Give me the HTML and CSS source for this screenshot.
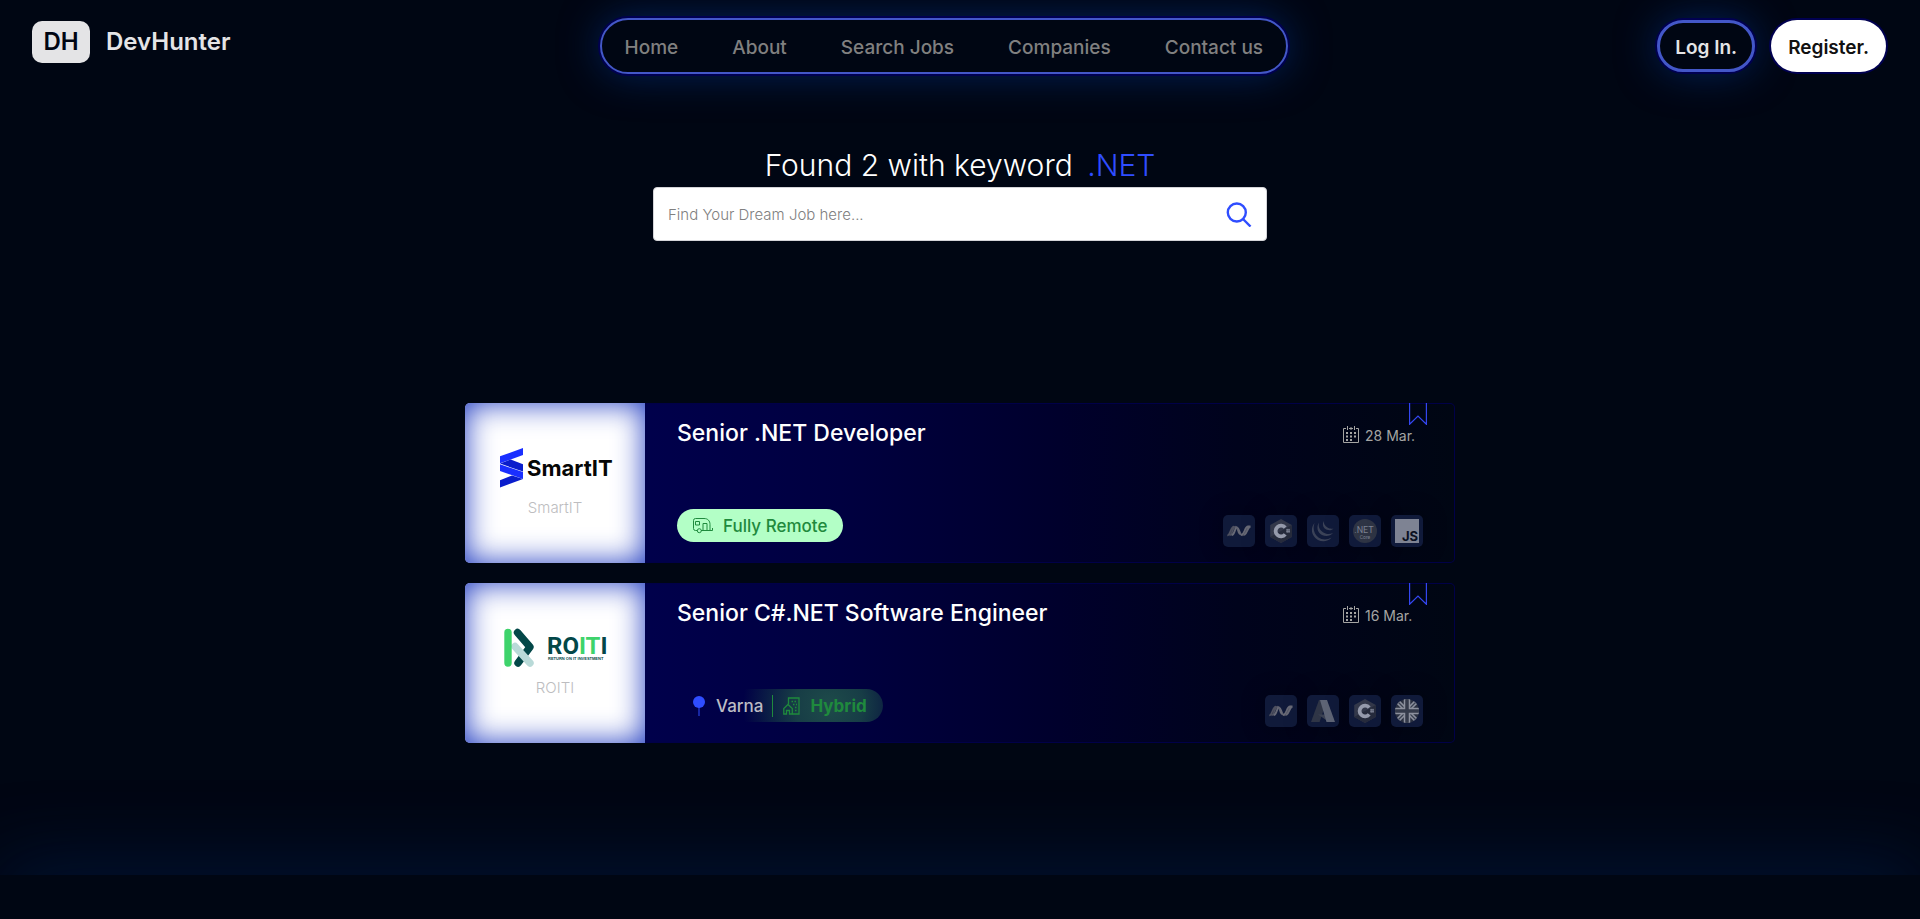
FILE: index.html
```html
<!DOCTYPE html>
<html lang="en">
<head>
<meta charset="utf-8">
<meta name="viewport" content="width=device-width, initial-scale=1">
<title>DevHunter</title>
<link rel="stylesheet" href="styles.css">
</head>
<body>
<svg class="sprite" aria-hidden="true">
  <defs>
    <linearGradient id="steel" x1="0" y1="0" x2="1" y2="0">
      <stop offset="0" stop-color="#45485a"/><stop offset=".5" stop-color="#6a6c78"/><stop offset="1" stop-color="#45485a"/>
    </linearGradient>
  </defs>
  <symbol id="i-net" viewBox="0 0 24 24">
    <path fill="none" stroke="#4e505f" stroke-width="1.700" d="M.3 16.300C3.500 16.500 3.500 7.600 7 7.600M2.500 16.300C5.700 16.300 5.500 7.600 8.500 7.600M15.500 16.300c3.500 0 3.500-8.500 6.500-8.700"/>
    <path fill="url(#steel)" d="M7 7c4-.7 5.300 2 6.500 5.500.9 2.200 1.500 3.900 3.600 4.100-4.300.9-5.900-1.300-7-5C9.300 9 8.500 7.600 7 7z"/>
    <path fill="none" stroke="#686a76" stroke-width="1.800" d="M14 16.100c4-.6 3.500-8.500 7-8.600h2.500c-3 .5-3.500 7.500-6.300 8.600M4.500 16.200C8 15.500 7.500 10 9.500 8.300"/>
  </symbol>
  <symbol id="i-csharp" viewBox="0 0 24 24">
    <path fill="#33384a" d="M12 0l10.800 6v12L12 24 1.200 18V6z"/>
    <path fill="#262b3c" d="M22.800 6v12L12 24 1.200 18z"/>
    <path fill="none" stroke="#959aab" stroke-width="3.800" d="M16.200 8.600a5.400 5.400 0 1 0 0 6.800"/>
    <path fill="none" stroke="#858a9c" stroke-width=".9" d="M18.200 9.800v4M20 9.800v4M17.200 10.900h3.800M17.200 12.700h3.800"/>
  </symbol>
  <symbol id="i-jquery" viewBox="0 0 24 24">
    <g fill="#3b4257">
      <path d="M3.500 4C-1 9.500.5 17.500 7 21c4.500 2.300 10.500 1.500 13.500-2.500-4 2.500-9.500 2.500-13 0C3 15.500 1.500 9.500 3.500 4z"/>
      <path d="M8 3.500C5 8 6.500 14 11 16c4 1.800 8.500 1 11-2-3.500 1.500-7 1.300-10-.8C8.500 11 7 7.500 8 3.500z"/>
      <path d="M12.500 2c-1.500 4 0 7.500 3.500 8.800 2.500.9 5 .4 6.500-1.300-2 .5-4.300.3-6-.9-2.500-1.500-3.800-3.800-4-6.600z"/>
    </g>
  </symbol>
  <symbol id="i-azure" viewBox="0 0 24 24">
    <path fill="#2f3546" d="M8 1h8L8.600 23H0z"/>
    <path fill="#3b4152" d="M7 15.500h9l2 7.500z"/>
    <path fill="#5e6475" d="M9 1h7l8 22h-8.500z"/>
  </symbol>
  <symbol id="i-uk" viewBox="0 0 24 24">
    <clipPath id="round"><circle cx="12" cy="12" r="12"/></clipPath>
    <g clip-path="url(#round)">
      <path fill="#2a3040" d="M0 0h24v24H0z"/>
      <path stroke="#8c909d" stroke-width="4.500" d="M2 2l20 20M22 2L2 22"/>
      <path stroke="#3a4050" stroke-width="1.300" d="M2 2l20 20M22 2L2 22"/>
      <path stroke="#8c909d" stroke-width="6.500" d="M12 0v24M0 12h24"/>
      <path stroke="#343a4a" stroke-width="3.500" d="M12 0v24M0 12h24"/>
    </g>
  </symbol>
  <symbol id="i-calendar" viewBox="0 0 16 18">
    <path fill="none" stroke="#a5a5a3" d="M3 2.500H.5v14h15v-14H13M6 2.500h4"/>
    <path stroke="#a5a5a3" d="M4.500 0v4M8 1v3M11.500 0v4"/>
    <path stroke="#a5a5a3" stroke-width="2" stroke-dasharray="2 2" d="M3 7h10M3 10.500h10M3 14h6"/>
  </symbol>
  <symbol id="i-bookmark" viewBox="0 0 18 22">
    <path fill="none" stroke="#3346f0" stroke-width="1.200" d="M.6 0v21.300L9 13l8.400 8.300V0"/>
  </symbol>
</svg>

<header class="header">
  <a class="brand" href="#"><span class="brand-mark">DH</span><span>DevHunter</span></a>
  <nav class="nav">
    <a href="#">Home</a>
    <a href="#">About</a>
    <a href="#">Search Jobs</a>
    <a href="#">Companies</a>
    <a href="#">Contact us</a>
  </nav>
  <div class="account">
    <button class="button button-outline" type="button">Log In.</button>
    <button class="button button-solid" type="button">Register.</button>
  </div>
</header>

<main class="main">
  <section class="search">
    <h1 class="search-title">Found 2 with keyword <span class="keyword">.NET</span></h1>
    <form class="search-box" role="search">
      <input class="search-input" type="text" aria-label="Search jobs" placeholder="Find Your Dream Job here...">
      <button class="search-button" type="button" aria-label="Search">
        <svg width="26" height="26" viewBox="0 0 26 26" fill="none" stroke="#2f4dff" stroke-width="2.400"><circle cx="10.800" cy="11.500" r="9"/><path d="M17 18l7.500 7.500"/></svg>
      </button>
    </form>
  </section>

  <section class="jobs" aria-label="Jobs">
    <article class="card">
      <a class="company" href="#">
        <svg class="company-logo" width="110" height="40" viewBox="0 0 110 40" role="img" aria-label="SmartIT">
          <path fill="#1a2fff" d="M0 8.300L23 0v7L0 15.300z"/>
          <path fill="#0a1dcc" d="M10.700 11.400L23 16.300v7.300L0 15.600z"/>
          <path fill="#1a2fff" d="M0 16.200l23 7.900v7L0 23z"/>
          <path fill="#0a1dcc" d="M0 32.300l12-4.800 11 3.600-23 8.300z"/>
          <text x="27" y="28" class="smartit">SmartIT</text>
        </svg>
        <span class="company-name">SmartIT</span>
      </a>
      <div class="card-body">
        <div class="card-row">
          <h2 class="job-title">Senior .NET Developer</h2>
          <span class="date"><svg width="16" height="18"><use href="#i-calendar"/></svg><time>28 Mar.</time></span>
        </div>
        <div class="card-row card-row-end">
          <span class="pill pill-remote">
            <svg width="20" height="16" viewBox="0 0 20 16" fill="none" stroke="#1f8a3d"><path d="M4.500 12.500H2.500a2 2 0 0 1-2-2v-8a2 2 0 0 1 2-2H11c4 0 6 2.500 6 6v6M8 12.500h11.500V10M2.500 3.500h4v3.500h-4zM10 12.500V5.500h4v7"/><circle cx="6.300" cy="12.700" r="2"/></svg>
            Fully Remote
          </span>
          <ul class="tech">
            <li><svg width="24" height="24"><use href="#i-net"/></svg></li>
            <li><svg width="24" height="24"><use href="#i-csharp"/></svg></li>
            <li><svg width="24" height="24"><use href="#i-jquery"/></svg></li>
            <li><svg width="24" height="24" viewBox="0 0 24 24"><circle cx="12" cy="12" r="12" fill="#2e3444"/><text x="11" y="14" text-anchor="middle" class="core-a">.NET</text><text x="12" y="20" text-anchor="middle" class="core-b">Core</text></svg></li>
            <li><svg width="24" height="24" viewBox="0 0 24 24"><path fill="#7e8393" d="M0 0h24v24H0z"/><text x="23" y="22" text-anchor="end" class="js-text">JS</text></svg></li>
          </ul>
        </div>
      </div>
      <button class="bookmark" type="button" aria-label="Save job"><svg width="18" height="22"><use href="#i-bookmark"/></svg></button>
    </article>

    <article class="card">
      <a class="company" href="#">
        <svg class="company-logo" width="102" height="40" viewBox="0 0 102 40" role="img" aria-label="ROITI">
          <g fill="none" stroke-width="7.400" stroke-linecap="round" stroke-linejoin="round">
            <path stroke="#034748" d="M13.500 4.500L26 19 14 35"/>
            <path stroke="#b9dad8" d="M11 18.500L26 35"/>
            <path stroke="#3ed36b" d="M4 4.500V35"/>
          </g>
          <text x="43" y="26" class="roiti">RO<tspan fill="#3ed36b">IT</tspan>I</text>
          <text x="44" y="32" class="roiti-tag">RETURN ON IT INVESTMENT</text>
        </svg>
        <span class="company-name">ROITI</span>
      </a>
      <div class="card-body">
        <div class="card-row">
          <h2 class="job-title">Senior C#.NET Software Engineer</h2>
          <span class="date"><svg width="16" height="18"><use href="#i-calendar"/></svg><time>16 Mar.</time></span>
        </div>
        <div class="card-row card-row-end">
          <span class="pill pill-place">
            <svg width="12" height="20" viewBox="0 0 12 20"><circle cx="6" cy="6" r="6" fill="#2f4dff"/><path stroke="#2f4dff" d="M6 11v9"/></svg>
            <span class="city">Varna</span>
            <span class="mode">
              <svg width="17" height="18" viewBox="0 0 17 18" fill="none" stroke="#1f8a3d" stroke-width="1.300"><path d="M5.500 7V1h10.500v16H9.500"/><path d="M.8 17v-5.500L5 7.500l4.300 4V17H6.500v-3.500h-3V17z"/><path stroke-dasharray="1.500 1.500" d="M8.500 4.500h5M10 7.500h4M12 10.500h2M12 13.500h2"/></svg>
              Hybrid
            </span>
          </span>
          <ul class="tech">
            <li><svg width="24" height="24"><use href="#i-net"/></svg></li>
            <li><svg width="24" height="24"><use href="#i-azure"/></svg></li>
            <li><svg width="24" height="24"><use href="#i-csharp"/></svg></li>
            <li><svg width="24" height="24"><use href="#i-uk"/></svg></li>
          </ul>
        </div>
      </div>
      <button class="bookmark" type="button" aria-label="Save job"><svg width="18" height="22"><use href="#i-bookmark"/></svg></button>
    </article>
  </section>
</main>
<footer class="footer"></footer>
</body>
</html>
```
FILE: styles.css
```css
* { box-sizing: border-box; }

body {
  margin: 0;
  min-height: 100vh;
  display: flex;
  flex-direction: column;
  overflow: hidden;
  background: #000613;
  color: #fff;
  font-family: Inter, "Liberation Sans", sans-serif;
}

a { color: inherit; text-decoration: none; }
button { font: inherit; cursor: pointer; }
.sprite { position: absolute; width: 0; height: 0; }

.header {
  display: flex;
  justify-content: space-between;
  align-items: flex-start;
  padding: 18px 34px 0 32px;
}

.brand {
  display: flex;
  align-items: center;
  gap: 16px;
  padding-top: 3px;
  color: #e4e4e6;
  font-size: 24px;
  line-height: 42px;
  font-weight: 600;
}
.brand-mark {
  width: 58px;
  border-radius: 10px;
  background: #e4e4e6;
  color: #000613;
  text-align: center;
}

.nav {
  display: flex;
  align-items: center;
  gap: 54px;
  height: 56px;
  padding: 2px 23px 0;
  border: 2px solid #4357c8;
  border-radius: 28px;
  box-shadow: 0 0 0 2px #000050, 0 0 40px #00225c;
  color: #808080;
  font-size: 19px;
  font-weight: 500;
}

.account { display: flex; gap: 16px; }
.button {
  height: 52px;
  border: 0;
  border-radius: 26px;
  box-shadow: 0 0 0 2px #000050;
  font-size: 19px;
  font-weight: 600;
  padding: 2px 17px 0;
  margin-top: 2px;
}
.button-outline {
  padding: 2px 15px 0;
  border: 3px solid #4357c8;
  background: #000613;
  color: #e4e4e6;
  box-shadow: 0 0 0 2px #000050, 0 0 40px #00225c;
}
.button-solid { background: #fff; color: #111; }

.main { flex: 1; padding: 0 16px; }

.search { max-width: 614px; margin: 70px auto 0; }
.search-title {
  margin: 0;
  text-align: center;
  font-size: 30px;
  line-height: 43px;
  font-weight: 300;
}
.keyword { margin-left: 6px; color: #2f4dff; }
.search-box {
  display: flex;
  align-items: center;
  height: 54px;
  padding: 0 14px;
  border: 1px solid #d4d4d8;
  border-radius: 4px;
  background: #fff;
}
.search-input {
  flex: 1;
  min-width: 0;
  padding: 0;
  border: 0;
  outline: 0;
  background: none;
  font-family: inherit;
  font-size: 15px;
  font-weight: 300;
}
.search-input::placeholder { color: #808080; opacity: 1; }
.search-button { display: flex; padding: 0; border: 0; background: none; }

.jobs {
  display: grid;
  gap: 20px;
  max-width: 990px;
  margin: 162px auto 0;
}
.card {
  position: relative;
  display: flex;
  min-height: 160px;
  border-radius: 5px;
  overflow: hidden;
  background: linear-gradient(90deg, #000050 10%, #000040 38%, #00002c 60%, #00031c 78%, #000613);
  box-shadow: inset 0 0 0 1px #000048;
}
.company {
  flex: none;
  width: 180px;
  display: flex;
  flex-direction: column;
  align-items: center;
  justify-content: center;
  gap: 10px;
  background: #fff;
  box-shadow: inset 0 0 30px #1c38c0;
  color: #bdbdc0;
  font-size: 15px;
  line-height: 20px;
  font-weight: 300;
}
.company-logo { overflow: visible; }
.smartit { font: 700 22px Inter, sans-serif; fill: #060606; }
.roiti { font: 700 24px Roboto, sans-serif; fill: #034748; }
.roiti-tag { font: 700 4px "Liberation Sans", sans-serif; fill: #034748; }

.card-body {
  flex: 1;
  min-width: 0;
  display: flex;
  flex-direction: column;
  justify-content: space-between;
  padding: 14px 32px 16px;
}
.card-row { display: flex; justify-content: space-between; align-items: flex-start; }
.card-row-end { align-items: flex-end; }
.job-title { margin: 0; font-size: 23px; line-height: 32px; font-weight: 500; }
.date {
  display: flex;
  align-items: center;
  gap: 6px;
  width: 80px;
  padding-top: 9px;
  color: #a5a5a3;
  font-size: 14px;
  white-space: nowrap;
}

.pill {
  display: flex;
  align-items: center;
  height: 33px;
  margin-bottom: 5px;
  padding: 0 16px;
  border-radius: 17px;
  font-size: 17px;
  font-weight: 500;
}
.pill-remote { gap: 10px; background: #b3ffc6; color: #1f8a3d; }
.pill-place {
  background: radial-gradient(circle 86px at 86px 50%, #1e4b4a, #173d46 40%, transparent) right / 140px 100% no-repeat;
}
.city { padding: 0 9px 0 11px; color: #bcbcc4; }
.mode {
  display: flex;
  align-items: center;
  gap: 10px;
  height: 22px;
  padding-left: 10px;
  border-left: 1px solid #1f8a3d;
  color: #1f8a3d;
  font-weight: 700;
}

.tech { display: flex; gap: 10px; margin: 0; padding: 0; list-style: none; }
.tech li {
  display: grid;
  place-items: center;
  width: 32px;
  height: 32px;
  border-radius: 5px;
  background: #101a3a;
  box-shadow: 0 0 24px rgba(0, 0, 12, .25);
}
.core-a { font: 400 9px Roboto, sans-serif; fill: #7b8090; }
.core-b { font: 400 5px Roboto, sans-serif; fill: #7b8090; }
.js-text { font: 700 13px Inter, sans-serif; fill: #0a1022; }

.bookmark {
  position: absolute;
  top: 0;
  right: 28px;
  display: flex;
  padding: 0;
  border: 0;
  background: none;
}

.footer {
  height: 44px;
  background: #000613;
  box-shadow: 0 0 80px #001a44;
}
```
